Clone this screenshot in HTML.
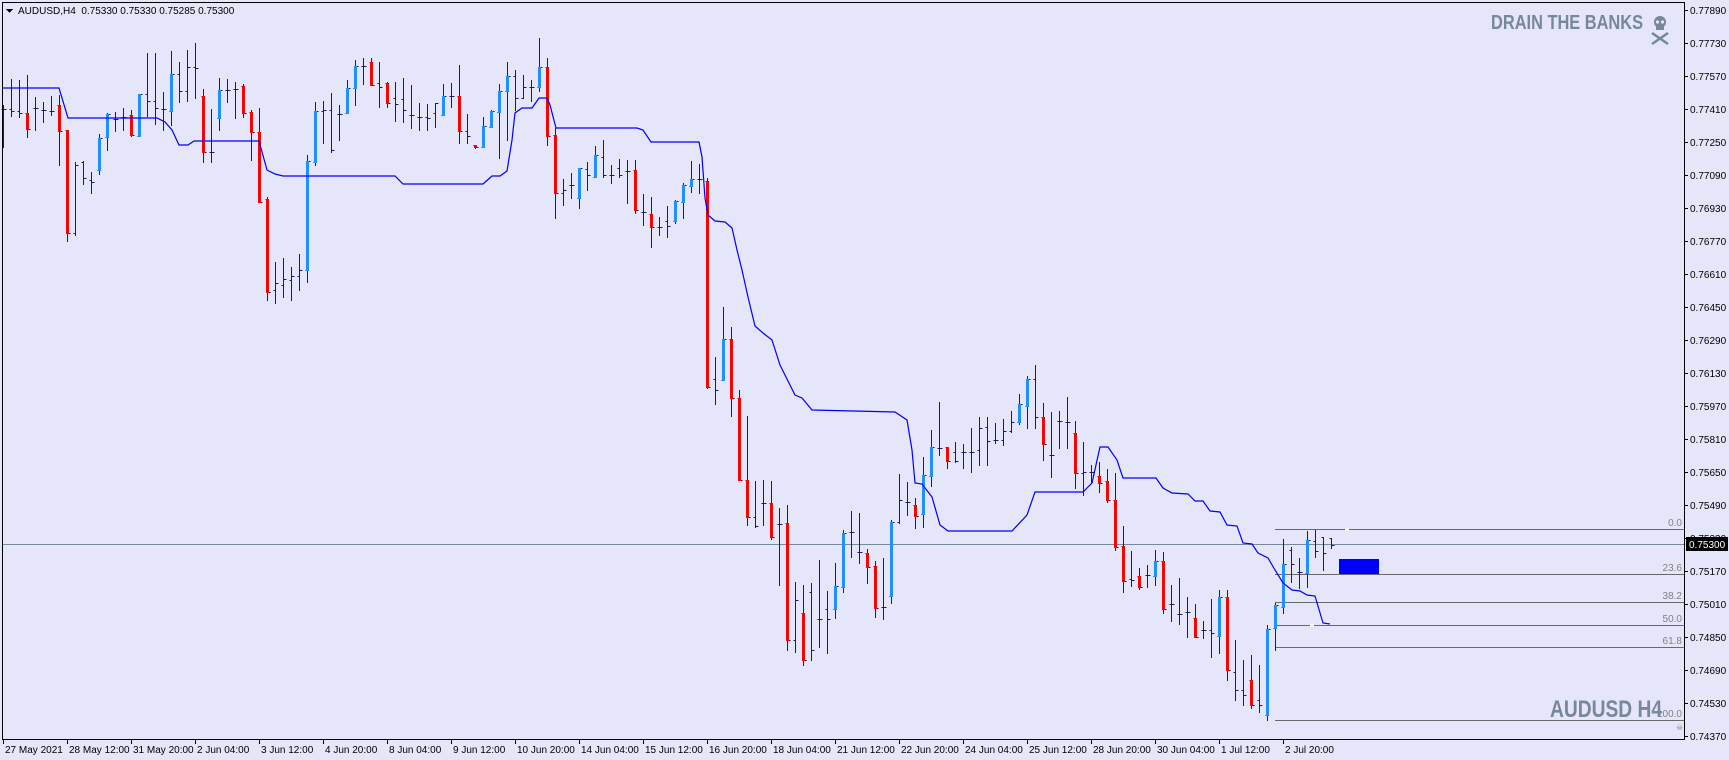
<!DOCTYPE html>
<html><head><meta charset="utf-8">
<style>
html,body{margin:0;padding:0;background:#e6e6fa;}
body{width:1729px;height:760px;overflow:hidden;position:relative;font-family:"Liberation Sans",sans-serif;}
svg{position:absolute;left:0;top:0;}
</style></head>
<body>
<svg id="c" width="1729" height="760" xmlns="http://www.w3.org/2000/svg" shape-rendering="crispEdges" font-family="Liberation Sans, sans-serif"></svg>
<script>
var D=[[105,147,109,109,0],[79,116,109,111,0],[80,117,111,113,0],[75,137,113,129,2],[97,130,108,108,0],[102,122,110,110,0],[96,115,111,111,0],[95,165,105,131,2],[130,241,130,233,2],[162,235,233,165,0],[161,184,162,178,0],[172,193,180,182,0],[134,174,170,138,1],[113,150,137,114,1],[112,131,119,119,0],[108,130,117,117,0],[110,136,115,135,2],[94,136,136,94,1],[53,116,94,101,0],[53,124,101,108,0],[92,130,109,109,0],[51,125,111,74,1],[62,102,74,91,0],[50,101,91,67,0],[43,98,67,68,0],[89,162,96,152,2],[109,162,152,152,0],[78,130,118,90,1],[79,102,90,90,0],[82,118,89,89,0],[84,117,86,113,2],[110,160,112,132,2],[108,202,132,202,2],[197,300,199,292,2],[262,303,290,283,0],[258,297,285,279,0],[267,300,280,276,0],[254,290,276,270,0],[155,282,270,161,1],[102,165,162,111,1],[101,143,111,110,0],[93,152,110,150,0],[105,140,114,114,0],[80,113,113,88,1],[60,105,88,66,1],[58,84,66,66,0],[58,85,62,85,2],[62,107,83,87,0],[82,107,83,103,2],[82,121,98,104,0],[78,122,99,110,0],[85,128,115,115,0],[103,130,117,117,0],[104,130,117,118,0],[103,127,113,103,0],[84,115,115,96,1],[83,107,96,96,0],[65,143,96,131,2],[114,143,131,136,0],[145,148,145,147,2],[117,147,147,126,1],[110,127,127,111,1],[84,158,112,91,1],[62,140,91,76,1],[70,110,76,98,0],[75,98,98,87,0],[80,101,87,87,0],[38,91,87,67,1],[58,145,67,136,2],[128,218,135,193,2],[179,205,193,190,0],[173,198,185,185,0],[168,208,198,168,1],[162,190,169,175,0],[146,177,177,155,1],[140,177,157,175,0],[165,183,175,175,0],[159,177,168,175,0],[160,203,171,171,0],[160,213,170,210,2],[194,225,212,212,0],[197,247,214,227,2],[217,235,227,227,0],[206,237,221,226,0],[200,223,221,201,1],[183,218,202,185,1],[161,192,186,179,1],[164,193,179,179,0],[178,388,181,387,2],[357,404,379,390,0],[307,380,380,339,1],[327,416,339,398,2],[390,480,398,480,2],[416,525,480,517,2],[481,527,517,526,0],[480,525,503,503,0],[481,539,503,537,2],[508,585,524,524,0],[505,650,523,640,2],[582,652,640,600,0],[585,665,613,660,2],[583,660,592,650,0],[560,647,619,619,0],[591,653,609,619,0],[563,618,609,586,1],[530,592,587,533,1],[511,557,532,532,0],[513,563,552,552,0],[549,583,553,567,2],[561,617,566,608,2],[558,619,607,607,0],[520,603,596,522,1],[474,523,522,500,0],[482,515,502,502,0],[498,528,505,516,2],[457,527,514,475,1],[430,486,476,447,1],[402,455,448,448,0],[447,468,447,461,2],[442,462,452,461,0],[444,468,452,452,0],[428,472,452,452,0],[417,465,450,428,0],[417,465,427,441,0],[423,443,440,440,0],[419,445,440,431,0],[411,432,431,422,0],[394,424,422,404,1],[376,428,406,379,1],[365,428,379,417,0],[403,460,417,444,2],[412,477,455,455,0],[411,448,421,421,0],[397,448,422,422,0],[421,488,433,473,2],[442,495,473,472,0],[465,483,472,472,0],[462,492,476,483,2],[469,502,481,500,2],[473,550,500,547,2],[526,592,546,581,2],[551,586,579,580,0],[568,589,576,587,2],[565,587,575,575,0],[550,585,576,561,1],[552,613,561,609,2],[585,621,604,604,0],[578,624,614,614,0],[597,637,612,612,0],[604,637,618,637,2],[621,638,630,630,0],[599,657,630,633,0],[590,653,636,597,1],[590,680,597,670,2],[640,700,672,690,0],[660,705,690,695,0],[655,708,680,705,2],[665,712,700,705,0],[625,720,715,629,1],[603,650,628,605,1],[539,613,607,564,1],[547,582,550,564,0],[558,588,572,572,0],[531,587,573,540,1],[530,557,541,551,0],[537,570,537,553,0],[538,548,538,545,0]];
var s='';
function L(x1,y1,x2,y2,c,w){s+='<line x1="'+x1+'" y1="'+y1+'" x2="'+x2+'" y2="'+y2+'" stroke="'+c+'" stroke-width="'+(w||1)+'"/>';}
function T(x,y,t,c,sz,anc){s+='<text x="'+x+'" y="'+y+'" fill="'+c+'" font-size="'+(sz||11)+'"'+(anc?' text-anchor="'+anc+'"':'')+'>'+t+'</text>';}
L(3,544.5,1684,544.5,'#778899');
[[529,'0.0'],[574,'23.6'],[602,'38.2'],[625,'50.0'],[647,'61.8'],[720,'100.0']].forEach(function(f){L(1275,f[0]+0.5,1684,f[0]+0.5,'#696969');T(1682,f[0]-3,f[1],'#808080',10,'end');});
var nv='#191970';
D.forEach(function(d,i){var x=Math.round(3+8*i)+0.5;
 L(x,d[0],x,d[1]+1,nv);
 L(x-2,d[2]+0.5,x,d[2]+0.5,nv);L(x,d[3]+0.5,x+3,d[3]+0.5,nv);
 if(d[4]){var t=Math.min(d[2],d[3]),b=Math.max(d[2],d[3]);s+='<rect x="'+(x-1.5)+'" y="'+t+'" width="3" height="'+Math.max(2,b-t+1)+'" fill="'+(d[4]==1?'#1e90ff':'#ff0000')+'"/>';}
});
var P=[[3,88],[59,88],[68,118],[157,118],[165,122],[172,130],[179,145],[188,145],[194,141],[259,141],[267,170],[275,174],[283,176],[395,176],[403,184],[483,184],[492,176],[500,176],[507,171],[512,140],[515,113],[522,108],[532,108],[539,98],[547,98],[550,105],[556,128],[637,128],[643,130],[651,142],[699,142],[702,157],[705,198],[708,215],[715,221],[725,222],[732,228],[737,250],[742,270],[748,297],[755,326],[763,333],[772,340],[780,365],[795,395],[802,398],[812,410],[895,412],[907,420],[912,450],[915,483],[922,484],[932,497],[940,525],[948,531],[1012,531],[1027,515],[1035,492],[1083,492],[1092,483],[1100,447],[1108,447],[1117,460],[1123,478],[1156,478],[1163,488],[1172,493],[1188,494],[1195,501],[1203,501],[1210,511],[1220,512],[1227,525],[1237,526],[1243,543],[1252,544],[1258,553],[1268,558],[1275,570],[1283,583],[1292,590],[1300,591],[1307,595],[1315,596],[1323,623],[1330,624]];
s+='<polyline fill="none" stroke="#0000ff" stroke-width="1.2" shape-rendering="auto" points="'+P.map(function(p){return p.join(',');}).join(' ')+'"/>';
s+='<rect x="1339" y="559" width="40" height="15" fill="#0000ff"/>';
s+='<rect x="1345" y="528" width="4" height="3" fill="#fff"/><rect x="1310" y="624" width="4" height="3" fill="#fff"/>';
L(2.5,2,2.5,740,'#000');L(2,2.5,1685,2.5,'#000');L(1684.5,2,1684.5,740,'#000');L(2,739.5,1685,739.5,'#000');
for(var k=0;k<=22;k++){var y=10+33*k;var v=(0.7789-0.0016*k).toFixed(5);L(1684,y+0.5,1688,y+0.5,'#000');T(1690,y+4,v,'#000',10);}
s+='<rect x="1686" y="537" width="42" height="14" fill="#000"/>';T(1689,548,'0.75300','#fff',10);
var tl=['27 May 2021','28 May 12:00','31 May 20:00','2 Jun 04:00','3 Jun 12:00','4 Jun 20:00','8 Jun 04:00','9 Jun 12:00','10 Jun 20:00','14 Jun 04:00','15 Jun 12:00','16 Jun 20:00','18 Jun 04:00','21 Jun 12:00','22 Jun 20:00','24 Jun 04:00','25 Jun 12:00','28 Jun 20:00','30 Jun 04:00','1 Jul 12:00','2 Jul 20:00'];
tl.forEach(function(t,i){var x=3+64*i;L(x+0.5,739,x+0.5,744,'#000');T(x+2,753,t,'#000',10);});
s+='<polygon points="6,9 13,9 9.5,13" fill="#000"/>';
T(18,14,'AUDUSD,H4&#160;&#160;0.75330 0.75330 0.75285 0.75300','#000',10);
s+='<text x="1643" y="29" fill="#778899" font-size="20" font-weight="bold" text-anchor="end" transform="translate(1643,0) scale(0.82,1) translate(-1643,0)">DRAIN THE BANKS</text>';
s+='<g fill="#778899" shape-rendering="auto"><ellipse cx="1660" cy="22" rx="6" ry="6"/><rect x="1656" y="25" width="8" height="5"/><circle cx="1657.5" cy="22" r="1.6" fill="#e6e6fa"/><circle cx="1662.5" cy="22" r="1.6" fill="#e6e6fa"/></g>';
s+='<g stroke="#778899" stroke-width="2.5" shape-rendering="auto"><line x1="1652" y1="33" x2="1668" y2="44"/><line x1="1668" y1="33" x2="1652" y2="44"/></g>';
s+='<text x="1662" y="717" fill="#778899" font-size="24" font-weight="bold" text-anchor="end" transform="translate(1662,0) scale(0.8,1) translate(-1662,0)">AUDUSD H4</text>';
s+='<text x="1676" y="730" fill="#808080" font-size="8">&#9760;</text>';
document.getElementById('c').innerHTML=s;
</script>
</body></html>
